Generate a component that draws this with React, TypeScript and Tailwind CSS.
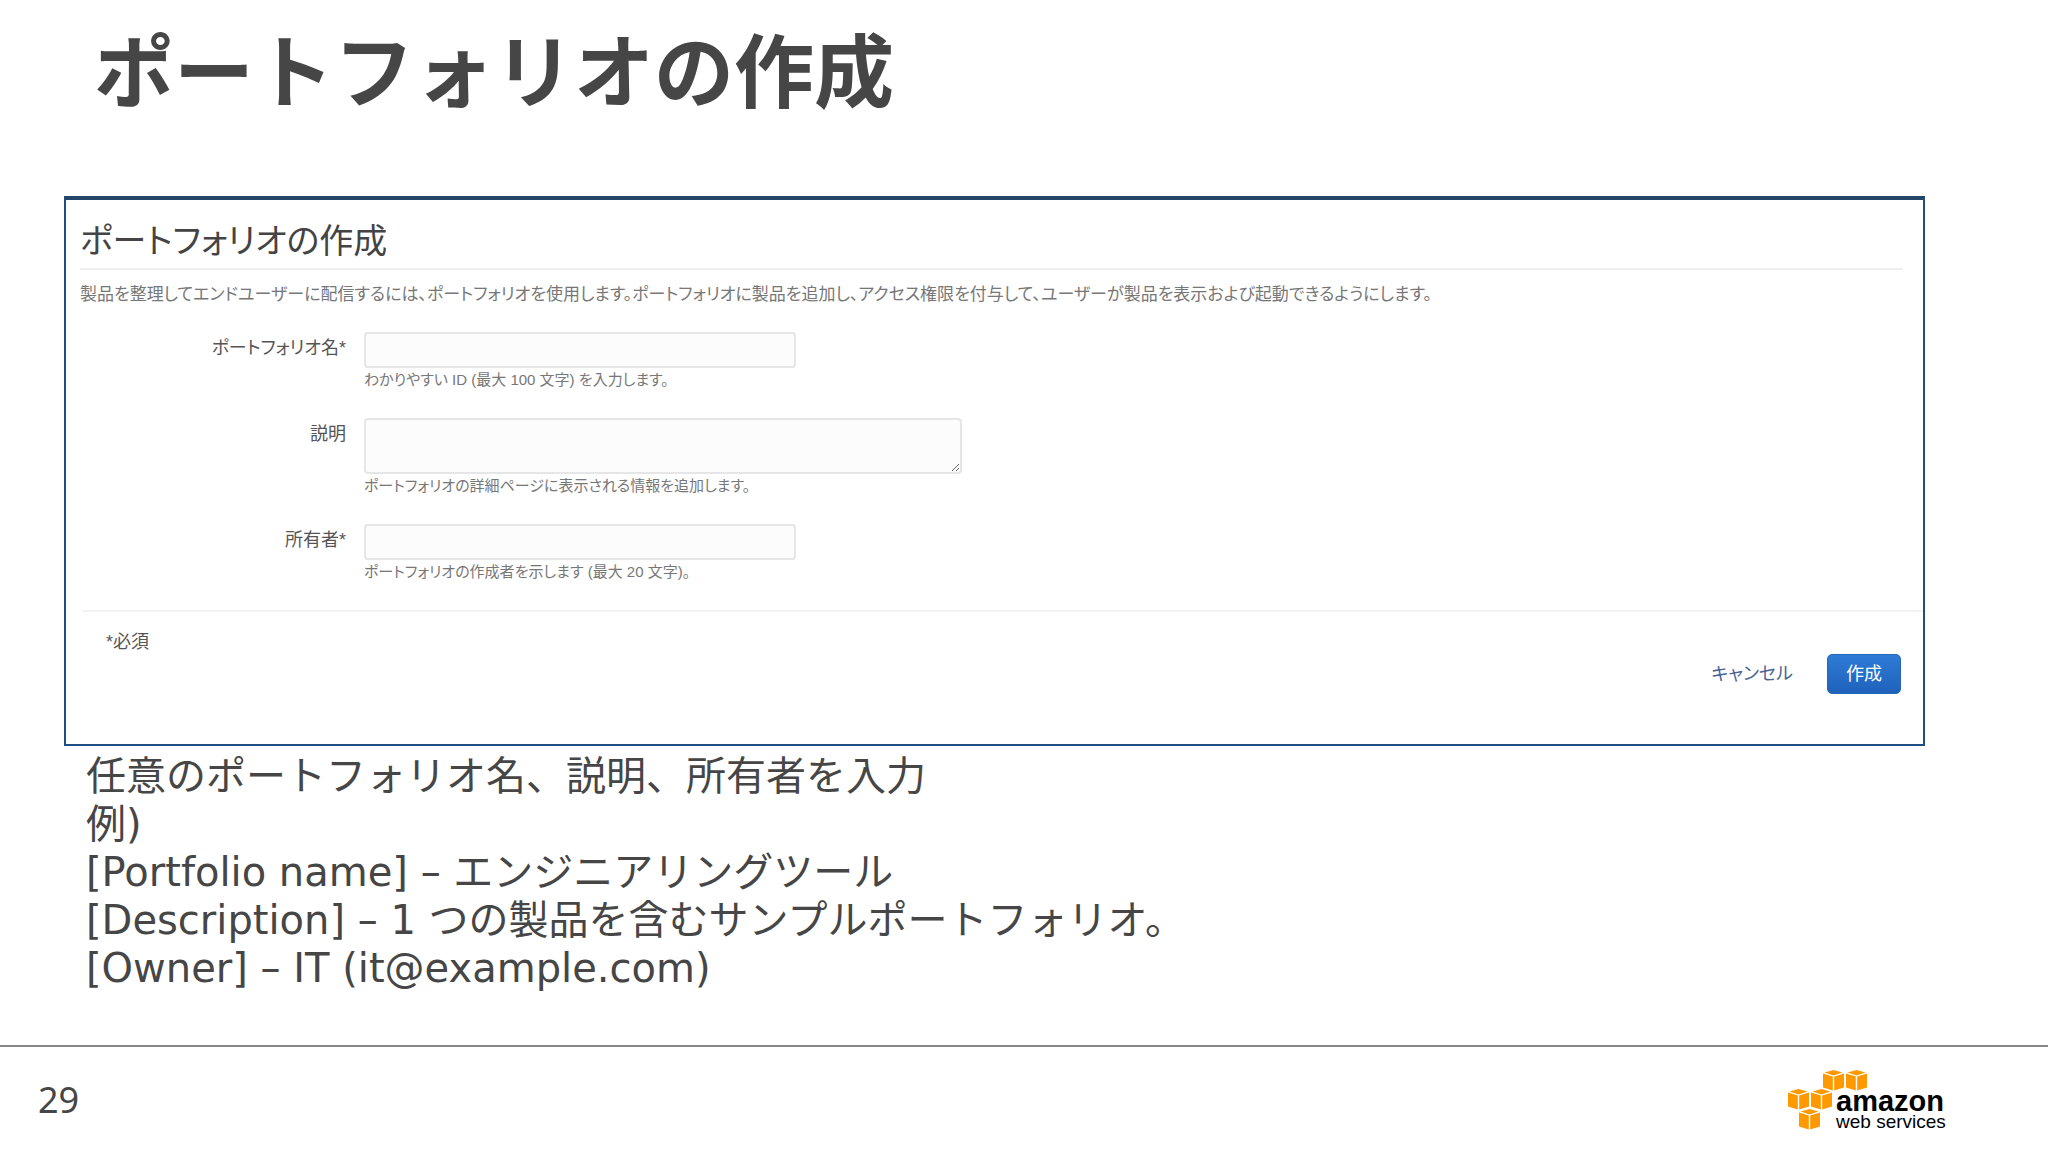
import type { ReactNode } from "react";

const NOTES = [
  "任意のポートフォリオ名、説明、所有者を入力",
  "例)",
  "[Portfolio name] – エンジニアリングツール",
  "[Description] – 1 つの製品を含むサンプルポートフォリオ。",
  "[Owner] – IT (it@example.com)",
];

function Field({ id, label, help, children }: { id: string; label: string; help: string; children: ReactNode }) {
  return (
    <div className="flex gap-[18px]">
      <label htmlFor={id} className="w-[266px] shrink-0 pt-1 text-right text-[18px] leading-6 text-[#555]">
        {label}
      </label>
      <div className="flex min-w-0 flex-1 flex-col">
        {children}
        <p className="pt-[2px] text-[15px] leading-5 text-[#777]">{help}</p>
      </div>
    </div>
  );
}

function Cube({ x, y }: { x: number; y: number }) {
  return (
    <g transform={`translate(${x} ${y})`} fill="#f90">
      <path d="M10.5 0 19.5 2.6 10.5 5.4 1.5 2.6Z" />
      <path d="M0 3.6 9.8 6.6V20.5L0 17.5Z" />
      <path d="M21 3.6 11.2 6.6V20.5L21 17.5Z" />
    </g>
  );
}

function Logo() {
  return (
    <div className="flex pt-1">
      <svg width="160" height="64" viewBox="0 0 160 64" className="overflow-visible text-black" fill="currentColor">
        <Cube x={35} y={0} />
        <Cube x={58} y={0} />
        <Cube x={0} y={19} />
        <Cube x={23} y={19} />
        <Cube x={11} y={39} />
        <text x="48" y="41" fontSize="29" className="font-['Liberation_Sans',sans-serif] font-bold">
          amazon
        </text>
        <text x="48" y="58" fontSize="19" className="font-['Liberation_Sans',sans-serif]">
          web services
        </text>
      </svg>
    </div>
  );
}

export default function App() {
  return (
    <div className="flex min-h-screen flex-col bg-white font-['DejaVu_Sans','Noto_Sans_CJK_JP',sans-serif] text-[#464646]">
      <main className="flex-1">
        <h1 className="px-[94px] pt-[18px] font-['Noto_Sans_CJK_JP',sans-serif] text-[80px] leading-[96px] font-bold">
          ポートフォリオの作成
        </h1>
        <section className="mt-[82px] mr-[123px] ml-16 border-2 border-t-4 border-[#1f4e86] border-t-[#244468] font-['Liberation_Sans','Noto_Sans_CJK_JP',sans-serif] [font-feature-settings:'palt']">
          <div className="mr-5 ml-[14px]">
            <h2 className="border-b-2 border-[#efefef] pt-5 pb-[6px] text-[34px] leading-[42px] text-[#444]">
              ポートフォリオの作成
            </h2>
            <p className="pt-[13px] text-[17px] leading-6 text-[#777]">
              製品を整理してエンドユーザーに配信するには、ポートフォリオを使用します。ポートフォリオに製品を追加し、アクセス権限を付与して、ユーザーが製品を表示および起動できるようにします。
            </p>
            <form id="portfolio" className="flex flex-col gap-7 pt-[25px] pb-7">
              <Field id="name" label="ポートフォリオ名*" help="わかりやすい ID (最大 100 文字) を入力します。">
                <input id="name" className="h-9 w-[432px] rounded-sm border-2 border-[#e6e6e6] bg-[#fcfcfc] px-2" />
              </Field>
              <Field id="desc" label="説明" help="ポートフォリオの詳細ページに表示される情報を追加します。">
                <textarea id="desc" className="h-14 w-[598px] rounded-sm border-2 border-[#e6e6e6] bg-[#fcfcfc] px-2" />
              </Field>
              <Field id="owner" label="所有者*" help="ポートフォリオの作成者を示します (最大 20 文字)。">
                <input id="owner" className="h-9 w-[432px] rounded-sm border-2 border-[#e6e6e6] bg-[#fcfcfc] px-2" />
              </Field>
            </form>
          </div>
          <div className="ml-4 border-t-2 border-[#f3f3f3] pt-[18px] pr-[22px] pb-[50px] pl-6">
            <p className="text-[18px] leading-6 text-[#555]">*必須</p>
            <div className="flex items-center justify-end gap-[34px]">
              <button type="button" className="text-[18px] leading-6 text-[#4a6494]">
                キャンセル
              </button>
              <button
                type="submit"
                form="portfolio"
                className="h-10 w-[74px] rounded-[5px] border border-[#2467b4] bg-linear-to-b from-[#2f7bd6] to-[#1f62bb] text-[18px] leading-6 text-white"
              >
                作成
              </button>
            </div>
          </div>
        </section>
        <div className="px-[86px] pt-[6px] text-[40px] leading-[48px]">
          {NOTES.map((line) => (
            <p key={line}>{line}</p>
          ))}
        </div>
      </main>
      <footer className="flex h-[107px] items-center justify-between border-t-2 border-[#868686] pr-[100px] pl-[38px]">
        <span className="font-['Noto_Sans',sans-serif] text-[36px] leading-none">29</span>
        <Logo />
      </footer>
    </div>
  );
}
